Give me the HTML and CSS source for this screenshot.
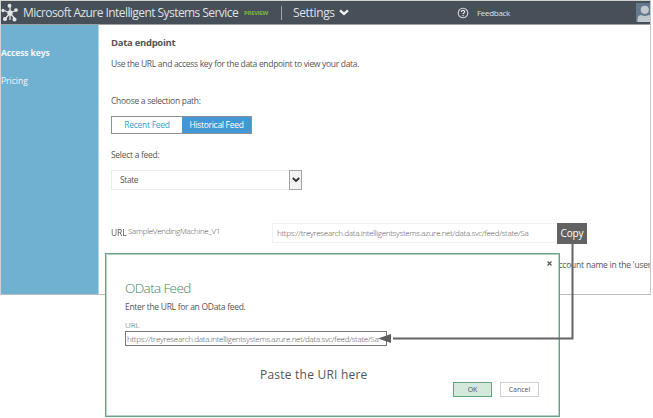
FILE: index.html
```html
<!DOCTYPE html>
<html lang="en">
<head>
<meta charset="utf-8">
<title>Azure Intelligent Systems Service</title>
<link rel="stylesheet" href="styles.css">
</head>
<body>
<div class="window">
  <header class="topbar">
    <svg class="logo" viewBox="0 0 18 20" width="18" height="20">
      <g stroke="#e4e7e9" stroke-width="1.3" fill="#e4e7e9"><path d="M9 10V3M9 10v7M9 10L2 7M9 10l7-3M9 10l-5 6M9 10l5 6"/><circle cx="9" cy="10" r="2"/><circle cx="8.5" cy="2.7" r="1.3"/><circle cx="2" cy="7.5" r="1"/><circle cx="15" cy="7" r="1.2"/><circle cx="4" cy="16" r="1.4"/><circle cx="13.5" cy="16.5" r="1.4"/></g>
    </svg>
    <span class="product">Microsoft Azure Intelligent Systems Service</span>
    <span class="preview">PREVIEW</span>
    <span class="divider"></span>
    <span class="settings">Settings</span>
    <svg class="chevron" viewBox="0 0 10 7" width="10" height="7"><path d="M1 1.3l4 3.6 4-3.6" fill="none" stroke="#f0f1f2" stroke-width="2.3"/></svg>
    <svg class="help" viewBox="0 0 12 12" width="12" height="12"><circle cx="6" cy="6" r="4.8" fill="none" stroke="#d3d6d9" stroke-width="1.1"/><path d="M4.3 4.9C4.3 2.7 7.8 2.8 7.7 4.8 7.6 6 6 5.9 6 7.2M6 8v1.2" fill="none" stroke="#e0e2e4" stroke-width="1.2"/></svg>
    <span class="feedback">Feedback</span>
    <svg class="avatar" viewBox="0 0 14 19" width="14" height="19"><path fill="#64798d" d="M0 0h14v19H0z"/><circle cx="8.8" cy="6.8" r="4.1" fill="#c0c7cd"/><path d="M1.5 19v-3q0-3.5 3.5-4 4 2 8 0l1 .5V19z" fill="#c0c7cd"/></svg>
  </header>
  <div class="main">
    <nav class="sidebar">
      <span class="nav active">Access keys</span>
      <span class="nav">Pricing</span>
    </nav>
    <section class="content">
      <h1>Data endpoint</h1>
      <p class="desc">Use the URL and access key for the data endpoint to view your data.</p>
      <p class="choose">Choose a selection path:</p>
      <div class="toggle"><span class="recent">Recent Feed</span><span class="historical">Historical Feed</span></div>
      <p class="feed">Select a feed:</p>
      <div class="select"><span class="state">State</span><span class="drop"><svg viewBox="0 0 8 6" width="8" height="6"><path d="M.8 1L4 4 7.2 1" fill="none" stroke="#333" stroke-width="1.9"/></svg></span></div>
      <div class="url-row"><span class="url-label">URL</span><span class="machine">SampleVendingMachine_V1</span><span class="url-box">https://treyresearch.data.intelligentsystems.azure.net/data.svc/feed/state/Sa</span><span class="copy">Copy</span></div>
      <p class="note">account name in the 'user</p>
    </section>
  </div>
</div>
<div class="dialog">
  <span class="close"><svg viewBox="0 0 5 5" width="5" height="5"><path d="M.5.5l4 4M4.5.5l-4 4" stroke="#555" stroke-width="1.2"/></svg></span>
  <h2>OData Feed</h2>
  <p class="enter">Enter the URL for an OData feed.</p>
  <p class="label">URL</p>
  <div class="input">https://treyresearch.data.intelligentsystems.azure.net/data.svc/feed/state/Sa</div>
  <p class="paste">Paste the URI here</p>
  <div class="buttons"><span class="btn ok">OK</span><span class="btn cancel">Cancel</span></div>
</div>
<svg class="connector" viewBox="0 0 196 102" width="196" height="102"><path d="M191.5 0v95.5H12" fill="none" stroke="#656565" stroke-width="2"/><path d="M-3 95.5l13-4.5v9z" fill="#5d5d5d"/></svg>
</body>
</html>
```
FILE: styles.css
```css
* { box-sizing: border-box; }
body { margin: 0; width: 653px; height: 418px; overflow: hidden; position: relative; background: #fff; color: #555; font: 8.5px/12px "Open Sans", "Noto Sans", sans-serif; letter-spacing: -.29px; }
h1, h2, p { margin: 0; font-weight: 400; }
span { white-space: nowrap; }
svg { display: block; flex: none; }
.window { width: 651px; height: 295px; overflow: hidden; border: 1px solid #d0d2d2; border-right-color: #c6c6c6; border-bottom: 1px solid #b9bdbf; }
.topbar { height: 24px; display: flex; align-items: center; background: #474f59; color: #dfe1e3; border-bottom: 1px solid #9da2a7; }
.product { width: 216px; margin-left: 4px; padding-top: 1px; font-size: 12px; letter-spacing: -.56px; }
.preview { width: 25px; margin-left: 5px; padding-top: 1px; font-size: 6px; font-weight: 700; letter-spacing: -.3px; color: #7fb63d; }
.divider { width: 1px; height: 14px; margin-left: 12px; background: #a1a6ab; }
.settings { width: 41px; margin-left: 11px; padding-top: 1px; font-size: 12px; letter-spacing: -.35px; }
.chevron { margin-left: 5px; }
.help { margin-left: 108px; }
.feedback { width: 32px; margin-left: 8px; font-size: 8px; letter-spacing: -.3px; }
.avatar { margin-left: auto; }
.main { display: flex; height: 270px; }
.sidebar { width: 98px; flex: none; padding-top: 22px; background: #70b0d1; color: #f3f9fc; display: flex; flex-direction: column; gap: 16px; border-right: 1px solid #b2d4e5; }
.nav { height: 12px; letter-spacing: 0; }
.active { font-weight: 700; letter-spacing: -.1px; }
.content { flex: 1; padding: 12px 0 0 12px; }
h1 { height: 12px; font-size: 9.5px; font-weight: 700; }
.desc { margin-top: 9px; height: 12px; letter-spacing: -.31px; }
.choose { margin-top: 25px; height: 12px; }
.toggle { margin-top: 9px; width: 141px; height: 18px; display: flex; border: 1px solid #8b9297; line-height: 16px; text-align: center; }
.recent { width: 70px; color: #35a3d0; }
.historical { flex: 1; background: #4497d5; color: #fff; }
.feed { margin-top: 15px; height: 12px; }
.select { margin-top: 9px; width: 191px; height: 20px; display: flex; align-items: center; border: 1px solid #ececec; border-right: 0; padding-left: 8px; }
.state { letter-spacing: -.4px; }
.drop { width: 13px; height: 20px; margin-left: auto; display: flex; align-items: center; justify-content: center; border: 1px solid #a4a4a4; background: #f2f2f2; }
.url-row { margin-top: 32px; height: 22px; display: flex; align-items: center; }
.url-label { width: 17px; filter: blur(.4px); letter-spacing: -.1px; }
.machine { width: 144px; font-weight: 300; margin-top: -4px; font-size: 8px; letter-spacing: -.3px; }
.url-box { width: 285px; flex: none; height: 20px; border: 1px solid #f1f1f1; border-right: 0; padding: 3px 0 0 4px; font-size: 8px; font-weight: 300; letter-spacing: -.28px; }
.copy { width: 30px; height: 21px; background: #626262; color: #fff; line-height: 20px; text-align: center; font-size: 10px; letter-spacing: -.1px; }
.note { margin: 15px 0 0 443px; height: 12px; white-space: nowrap; letter-spacing: -.22px; }
.dialog { position: absolute; left: 105px; top: 253px; width: 455px; height: 164px; background: #fff; border: 1px solid #6aa384; box-shadow: inset 0 0 0 1px #b6d2c2; padding: 25px 0 0 19px; }
.close { position: absolute; top: 7px; right: 7px; }
h2 { height: 18px; line-height: 18px; font-size: 13.5px; font-weight: 300; color: #3f8561; letter-spacing: -.62px; }
.enter { margin-top: 4px; height: 12px; }
.label { margin-top: 6px; height: 12px; font-size: 8px; letter-spacing: 0; font-weight: 300; }
.input { width: 262px; height: 15px; border: 1px solid #777; padding-left: 1px; line-height: 13px; font-size: 8px; font-weight: 300; letter-spacing: -.28px; white-space: nowrap; }
.paste { height: 18px; margin: 20px 0 0 135px; line-height: 18px; font-size: 12px; letter-spacing: .22px; }
.buttons { display: flex; gap: 8px; margin: -2px 0 0 328px; }
.btn { width: 39px; height: 15px; line-height: 13px; font-size: 7px; letter-spacing: 0; text-align: center; border: 1px solid #d0d0d0; }
.ok { border-color: #62a280; background: #d3e9dc; }
.connector { position: absolute; left: 381px; top: 243px; overflow: visible; }
```
